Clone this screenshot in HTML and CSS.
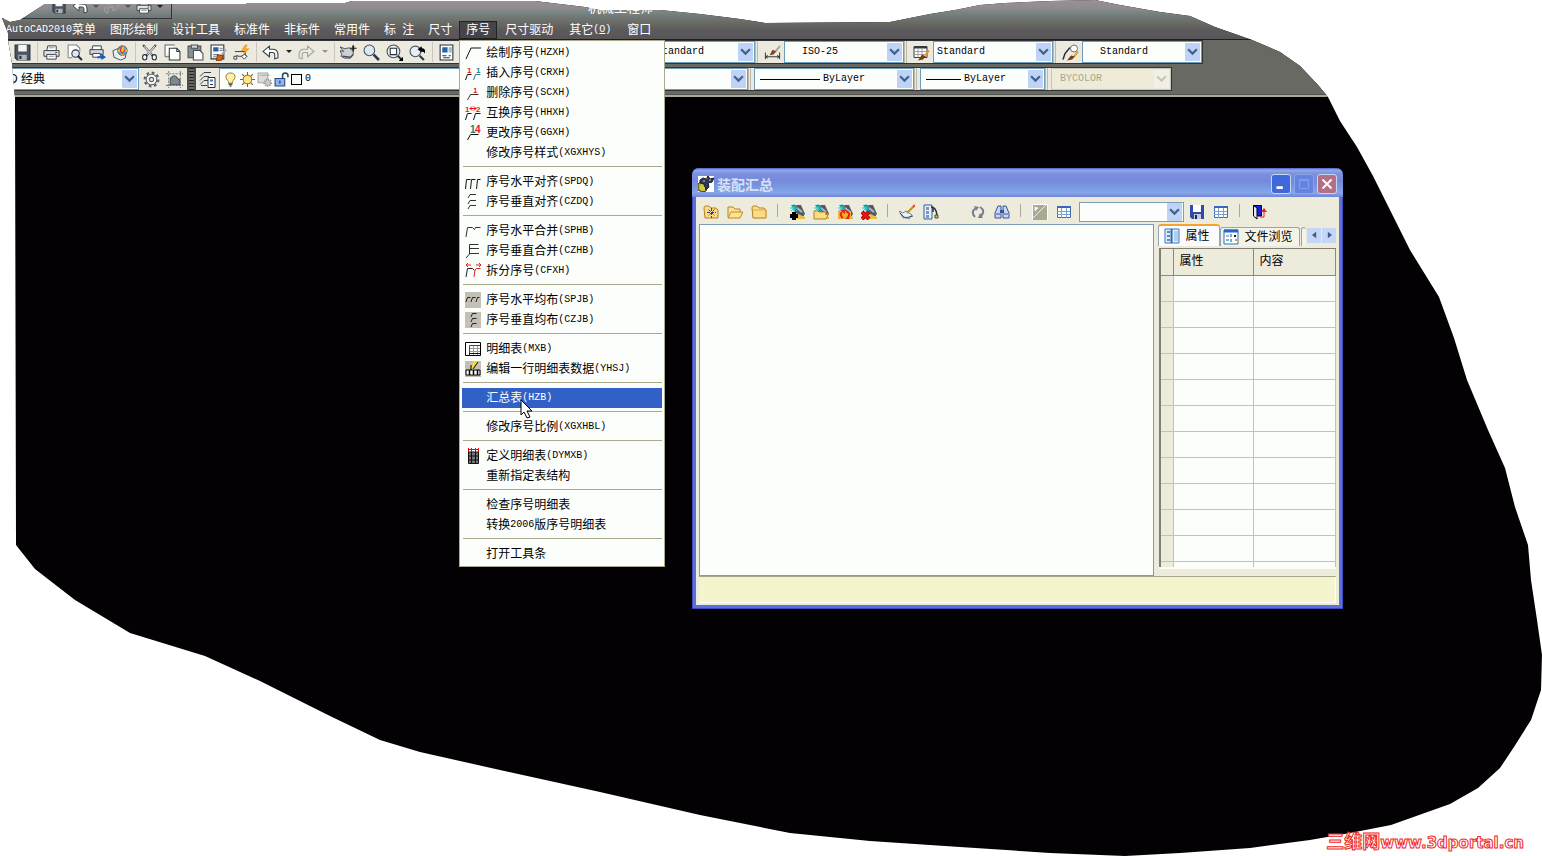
FILE: index.html
```html
<!DOCTYPE html>
<html lang="zh-CN">
<head>
<meta charset="utf-8">
<title>装配汇总</title>
<link rel="stylesheet" href="styles.css">
</head>
<body>
<svg class="defs" aria-hidden="true">
  <symbol id="i-save" viewBox="0 0 16 16"><path d="M1 1h14v14H3l-2-2z" fill="#4c5360" stroke="#26303c"/><path d="M4 1h8v6H4z" fill="#f4f4f0"/><path d="M4 10h8v5H4z" fill="#a9b3ba"/><path d="M5 11h2v3H5z" fill="#2b3340"/></symbol>
  <symbol id="i-print" viewBox="0 0 18 16"><path d="M5 1h9v5H4z" fill="#fff" stroke="#333a45"/><path d="M1 6h16v6H1z" fill="#e3e5e6" stroke="#333a45"/><path d="M4 10h10v5H4z" fill="#fff" stroke="#333a45"/><path d="M6 3h6M6 12h6" stroke="#8b949b"/><path d="M13 8h2" stroke="#333a45"/></symbol>
  <symbol id="i-preview" viewBox="0 0 16 16"><path d="M2 13V1h8l3 3v3" fill="#fff" stroke="#7c858d"/><path d="M2 13h4" stroke="#7c858d"/><circle cx="9" cy="9" r="3.5" fill="#dfe9ef" stroke="#26303c"/><path d="M11 11l4 4" stroke="#26303c" stroke-width="2"/></symbol>
  <symbol id="i-plot" viewBox="0 0 18 16"><path d="M4 1h9v5H3z" fill="#fff" stroke="#333a45"/><path d="M1 5h14v5H1z" fill="#d5d8da" stroke="#333a45"/><path d="M4 9h8v4H4z" fill="#fff" stroke="#333a45"/><path d="M9 12h4v-3l5 4-5 3v-2H9z" fill="#1957c2"/></symbol>
  <symbol id="i-dwf" viewBox="0 0 18 16"><path d="M1 6l5-2 9 4-1 6-5 2-7-3z" fill="#edf0f2" stroke="#46505a"/><circle cx="11" cy="6" r="5" fill="#55b8d0" stroke="#46505a"/><path d="M11 1v10M6 6h10" stroke="#f0d040" stroke-width="2"/><path d="M11 1q-4 5 0 8l3-4" stroke="#e33" fill="none" stroke-width="1.5"/></symbol>
  <symbol id="i-cut" viewBox="0 0 16 16"><path d="M2 1l9 10M14 1L5 11" stroke="#414b55" stroke-width="2"/><path d="M3 2l7 8M13 2l-7 8" stroke="#dce0e2"/><ellipse cx="3.5" cy="12.5" rx="2" ry="2.5" fill="#fff" stroke="#26303c"/><ellipse cx="12.5" cy="12.5" rx="2" ry="2.5" fill="#fff" stroke="#26303c"/></symbol>
  <symbol id="i-copy" viewBox="0 0 16 16"><path d="M1 12V1h9M1 12h4" fill="#fff" stroke="#636b74"/><path d="M5 4h7l3 3v8H5z" fill="#fff" stroke="#333a45"/><path d="M12 4v3h3" fill="none" stroke="#333a45"/></symbol>
  <symbol id="i-paste" viewBox="0 0 16 16"><path d="M1 2h12v11H1z" fill="#8b9198" stroke="#46505a"/><path d="M4 1h6v3H4z" fill="#d5d8da" stroke="#46505a"/><path d="M6 6h6l3 3v6H6z" fill="#fff" stroke="#46505a"/></symbol>
  <symbol id="i-match" viewBox="0 0 16 16"><path d="M1 1h12v13H1z" fill="#fff" stroke="#26303c"/><path d="M3 3h5v4H3z" fill="#2f5fa5"/><path d="M9 4h3M9 6h3M3 10h4M3 12h3" stroke="#78828c"/><path d="M15 5l-4 5" stroke="#aab" stroke-width="2"/><path d="M7 10l5 1-1 4-5 1z" fill="#cf6515" stroke="#8a3d0b"/></symbol>
  <symbol id="i-block" viewBox="0 0 18 16"><path d="M2 7h11v5H5M1 13l4-2" fill="none" stroke="#333a45"/><path d="M1 12h3v3H1zM9 12l3-2 3 2-3 3z" fill="#fff" stroke="#333a45"/><path d="M13 0l-4 6h4l-2 4 6-6h-4l2-4z" fill="#ffb30f" stroke="#dc7d08" stroke-width=".5"/></symbol>
  <symbol id="i-undo" viewBox="0 0 16 14"><path d="M1 6l6-5v3h3q5 0 5 5v3l-3 1V9q0-2-2-2H7v4z" fill="#fff" stroke="#39434e"/></symbol>
  <symbol id="i-redo" viewBox="0 0 16 14"><path d="M15 6L9 1v3H6Q1 4 1 9v3l3 1V9q0-2 2-2h3v4z" fill="none" stroke="#a2a4a2"/></symbol>
  <symbol id="i-caret" viewBox="0 0 6 4"><path d="M0 0h6L3 3z" fill="currentColor"/></symbol>
  <symbol id="i-pan" viewBox="0 0 18 16"><path d="M0 2l5 2 5-1 4 4v3l-3 4H5l-4-2 1-2-2-4 4 1z" fill="#cdd1d3" stroke="#46505a"/><path d="M3 12l8 1 3-3" fill="none" stroke="#46505a" stroke-width="1.500"/><path d="M14 0v7M10.500 3.500h7" stroke="#000"/><path d="M13 1h2v5h-2z" fill="#222"/></symbol>
  <symbol id="i-zoom" viewBox="0 0 16 16"><circle cx="6" cy="6" r="5" fill="#dce8f1" stroke="#46505a"/><path d="M10 10l5 5" stroke="#29394e" stroke-width="2.500"/></symbol>
  <symbol id="i-zoomwin" viewBox="0 0 16 16"><circle cx="7" cy="7" r="6" fill="#e8eef1" stroke="#46505a"/><path d="M4 4h6v6H4z" fill="#fff" stroke="#26303c"/><path d="M11 11l4 4" stroke="#29394e" stroke-width="2"/><path d="M16 12v4h-4z"/></symbol>
  <symbol id="i-zoomprev" viewBox="0 0 16 16"><circle cx="6" cy="7" r="5" fill="#e8eef1" stroke="#46505a"/><path d="M10 11l4 4" stroke="#29394e" stroke-width="2"/><path d="M8 5l4-3v2q4 0 3 5-1-2-3-2v1z"/></symbol>
  <symbol id="i-props" viewBox="0 0 14 16"><path d="M1 1h12v14H1z" fill="#fff" stroke="#26303c"/><path d="M3 3h5v5H3z" fill="#2760a6"/><path d="M9 3h3v5H9z" fill="#9db8d2"/><path d="M3 11h4M9 11h2M4 13h6" stroke="#333"/></symbol>
  <symbol id="i-dim" viewBox="0 0 18 16"><path d="M1.500 8v7M16.500 8v7M2 12.500h14M4 11l-2 1.500L4 14M14 11l2 1.500-2 1.500" fill="none" stroke="#26303c"/><path d="M17 1l-5 6" stroke="#a8a49c" stroke-width="2"/><path d="M9 5l4 2-3 3-4 1z" fill="#7a4424"/></symbol>
  <symbol id="i-tbl" viewBox="0 0 17 16"><path d="M1 2h13v11H1z" fill="#fff" stroke="#333a45"/><path d="M1 3h13" stroke="#333a45" stroke-width="2"/><path d="M5 4v9M9 4v9M1 7h13M1 10h13" stroke="#9ba0a3"/><path d="M16 6l-4 5" stroke="#ed941d" stroke-width="2"/><path d="M9 10l4 2-3 3-5 1z" fill="#7a3b14"/></symbol>
  <symbol id="i-lead" viewBox="0 0 17 16"><path d="M1 15L3 9l5-6" fill="none" stroke="#26303c" stroke-width="1.500"/><circle cx="12" cy="4" r="3.500" fill="#fff" stroke="#697480"/><path d="M16 7l-4 5" stroke="#ed941d" stroke-width="2"/><path d="M9 11l4 1-3 3-5 1z" fill="#7a3b14"/></symbol>
  <symbol id="i-gear" viewBox="0 0 16 16"><circle cx="8" cy="8" r="6.500" fill="none" stroke="#59616a" stroke-width="2" stroke-dasharray="2.550"/><circle cx="8" cy="8" r="5" fill="#fafaf7" stroke="#59616a"/><circle cx="8" cy="8" r="2" fill="#ece9d8" stroke="#59616a"/></symbol>
  <symbol id="i-space" viewBox="0 0 16 16"><path d="M2.500 0v16M13.500 0v16M0 2.500h16M0 13.500h16" stroke="#7b8388" stroke-dasharray="2 1"/><path d="M4 7q4-5 7 0l2 1v5H4z" fill="#7d878e" stroke="#46505a"/></symbol>
  <symbol id="i-layers" viewBox="0 0 17 16"><path d="M1 5l4-4h7M1 9l4-4h5M1 13l4-4h4M2 14h6" fill="none" stroke="#39434e"/><path d="M9 6h7v10H9z" fill="#fff" stroke="#26303c"/><path d="M11 8h3v2h-3z" fill="#3276bd"/><path d="M11 13h3" stroke="#26303c"/></symbol>
  <symbol id="i-bulb" viewBox="0 0 12 16"><path d="M6 1C0 1 0 7 4 10v2h4v-2c4-3 4-9-2-9z" fill="#fff2a0" stroke="#887842"/><path d="M4 13h4M5 15h2" stroke="#46505a" stroke-width="1.500"/></symbol>
  <symbol id="i-sun" viewBox="0 0 14 14"><path d="M7 0v14M0 7h14M2 2l10 10M12 2L2 12" stroke="#726035"/><circle cx="7" cy="7" r="4" fill="#ffe683" stroke="#a37c2b"/></symbol>
  <symbol id="i-vpf" viewBox="0 0 14 14"><path d="M1 1h9v9H1zM3 3h9" fill="#ddd" stroke="#a6a6a6"/><circle cx="10" cy="10" r="3" fill="#ccc" stroke="#999" stroke-dasharray="1 1" stroke-width="2"/></symbol>
  <symbol id="i-lock" viewBox="0 0 14 14"><path d="M8 7V3q0-2 2.500-2T13 3v2" fill="none" stroke="#2d4a70" stroke-width="1.500"/><path d="M1 6h9v7H1z" fill="#8fb5ee" stroke="#29497d"/><path d="M5.500 8v3" stroke="#19335d"/></symbol>
  <symbol id="i-down" viewBox="0 0 10 7"><path d="M1 1l4 4 4-4" fill="none" stroke="currentColor" stroke-width="2"/></symbol>

  <symbol id="m-draw" viewBox="0 0 16 16"><path d="M1 14L6 3h10" fill="none" stroke="#111"/></symbol>
  <symbol id="m-ins" viewBox="0 0 16 16"><path d="M.5 15l2-5.500h4" fill="none" stroke="#111"/><path d="M8.500 15l2-5.500h5" fill="none" stroke="#287c82"/><text x="2" y="8" class="num red">1</text><text x="11" y="8" class="num teal">1</text></symbol>
  <symbol id="m-del" viewBox="0 0 16 16"><path d="M2.500 15l3-5.500h8" fill="none" stroke="#333"/><text x="8" y="8" class="num red">1</text></symbol>
  <symbol id="m-swap" viewBox="0 0 16 16"><path d="M.5 15l2-6.500h4M8.500 15l2-6.500h5" fill="none" stroke="#111"/><text x="0" y="7" class="num red">1</text><text x="11" y="7" class="num red">2</text><path d="M5 3.500h6M7 1.500l-2 2 2 2M9 1.500l2 2-2 2" fill="none" stroke="red"/></symbol>
  <symbol id="m-chg" viewBox="0 0 16 16"><path d="M2.500 15l3-5.500h8" fill="none" stroke="#111"/><text x="5" y="8" class="num big teal">1</text><text x="10" y="8" class="num big red">4</text></symbol>
  <symbol id="m-ha" viewBox="0 0 16 16"><path d="M.5 15l1-9.500h4M5.500 15l1-9.500h4M11.500 15l1-9.500h3" fill="none" stroke="#111"/></symbol>
  <symbol id="m-va" viewBox="0 0 16 16"><path d="M3 4l2-3.500h6M3 10l2-3.500h6M3 15l2-3.500h6" fill="none" stroke="#333"/></symbol>
  <symbol id="m-hm" viewBox="0 0 16 16"><path d="M1 14L2.500 4.500h5l2 2 1-2h5" fill="none" stroke="#333"/></symbol>
  <symbol id="m-vm" viewBox="0 0 16 16"><path d="M1 15l3.500-4V1.500h9M5 5.500h9M5 10.500h9" fill="none" stroke="#333"/></symbol>
  <symbol id="m-split" viewBox="0 0 16 16"><path d="M1 14L2.500 5.500h5l2 2" fill="none" stroke="#222"/><path d="M9 14l1-7 1.500-1.500h4M1 2h5M3 0L1 2l2 2M11 2h5M14 0l2 2-2 2" fill="none" stroke="#e02020"/></symbol>
  <symbol id="m-hd" viewBox="0 0 16 16"><path d="M0 0h16v16H0z" fill="#c5c0b6"/><path d="M1 10l1.500-4.500h3M6 10l1.500-4.500h3M11 10l1.500-4.500h2" fill="none" stroke="#222"/></symbol>
  <symbol id="m-vd" viewBox="0 0 16 16"><path d="M0 0h16v16H0z" fill="#c5c0b6"/><path d="M6 5l1.500-3.500h4M6 10l1.500-3.500h4M6 15l1.500-3.500h4" fill="none" stroke="#222"/></symbol>
  <symbol id="m-list" viewBox="0 0 16 16"><path d="M.5 1.500h15v13H.5z" fill="#fff" stroke="#000"/><path d="M4.500 14V4.500H15" fill="none" stroke="#a32020"/><path d="M5 7.500h10M5 10.500h10M8.500 5v9M12.500 5v9" stroke="#999"/><path d="M4 12.500h11" stroke="#111"/></symbol>
  <symbol id="m-edit" viewBox="0 0 16 16"><path d="M0 0h16v16H0z" fill="#c5c0b6"/><path d="M1 9h14v5H1z" fill="#fff" stroke="#000"/><path d="M4.500 9v5M8.500 9v5M12.500 9v5" stroke="#000" stroke-width="1.500"/><path d="M11 0L7 8" stroke="#f4df27" stroke-width="3"/><path d="M13 1L8 8M6 4v5" stroke="#000"/></symbol>
  <symbol id="m-def" viewBox="0 0 16 16"><path d="M3.500 4h10v11.500h-10z" fill="#777" stroke="#111"/><path d="M6.500 4v12M10.500 4v12M3 8h11M3 12h11" stroke="#111"/><path d="M3 1.500h11M3.500 0v4M6.500 0v4M10.500 0v4M13.500 0v4" stroke="red"/></symbol>

  <symbol id="d-app" viewBox="0 0 16 16"><path d="M0 0h16v16H0z" fill="#fff"/><path d="M0 8l4-3 5 5-1 5-4 1-4-2z" fill="#c4b52c" stroke="#262c35"/><path d="M2 4l3-2 3 1 2-3 2 3 4-1-2 4-4 1 1 4-3 3-2-6-4-1z" fill="#27376c" stroke="#15192b"/><path d="M8 2h1M11 4h2M5 5h2M3 9l2 1M2 12h5M4 10v5M6 11v4" stroke="#e0d442"/></symbol>
  <symbol id="d-folder" viewBox="0 0 16 14"><path d="M1 3q0-2 2-2h3l2 2h5l2 2v8H2z" fill="#f9dc87" stroke="#b78125"/><path d="M2 5h12M3 13h12V6" fill="none" stroke="#e0ac45"/></symbol>
  <symbol id="d-open" viewBox="0 0 16 14"><path d="M1 12V2h5l2 2h5v3" fill="#f9e29e" stroke="#b78125"/><path d="M1 13l3-6h12l-3 6z" fill="#ffe48e" stroke="#c58a29"/></symbol>
  <symbol id="d-new" viewBox="0 0 16 14"><path d="M1 3q0-2 2-2h3l2 2h5l2 2v8H2z" fill="#f9dc87" stroke="#b78125"/><path d="M8.500 3v10M4 7.500h9M5.500 4.500l6 6M11.500 4.500l-6 6" stroke="#2342bb" stroke-dasharray="3 1"/></symbol>
  <symbol id="d-part" viewBox="0 0 16 16"><path d="M2 1h10l4 9-2 3-7-4z" fill="#535c64"/><path d="M8 4l5 4" stroke="#aeb8c1" stroke-width="2"/><path d="M6 15l3-5 7 3v2z" fill="#e9c142"/><path d="M5 0v8M1 4h8M2 1l6 6M8 1L2 7" stroke="#18ccda"/></symbol>
  <symbol id="d-add" viewBox="0 0 16 16"><use href="#d-part"/><path d="M3 8h4v2h2v4H7v2H3v-2H1v-4h2z"/></symbol>
  <symbol id="d-popen" viewBox="0 0 16 16"><use href="#d-part"/><path d="M1 14V7h4l1 1h7v3l3-2-3 6H1z" fill="#fbdc82" stroke="#b78125"/></symbol>
  <symbol id="d-ref" viewBox="0 0 16 16"><use href="#d-part"/><path d="M1 7h13v8H1z" fill="#e8b531"/><path d="M6 14q-4-3-1-6M9 7q5 2 2 7" fill="none" stroke="#eb2410" stroke-width="2"/><path d="M3 6h5v4zM8 15l4 0 0-4z" fill="#eb2410"/></symbol>
  <symbol id="d-rm" viewBox="0 0 16 16"><use href="#d-part"/><path d="M1 8l7 7M8 8l-7 7" stroke="#9b0707" stroke-width="4"/><path d="M1 8l7 7M8 8l-7 7" stroke="#f21414" stroke-width="2"/></symbol>
  <symbol id="d-pen" viewBox="0 0 16 16"><path d="M0 7l4 2 3-2 6 4-3 4-4-2-2 1z" fill="#e8f2f8" stroke="#68829a"/><path d="M6 14l8-2M1 9l5 5" stroke="#38516b"/><path d="M15 2L8 9" stroke="#b9932b" stroke-width="2"/><path d="M16 1l-2 2" stroke="#e43" stroke-width="2"/></symbol>
  <symbol id="d-tree" viewBox="0 0 16 16"><path d="M1 1h8v14H1z" fill="#e7eeff" stroke="#2862a5"/><path d="M3 3h3v3H3zM3 7h3v3H3zM3 11h3v3H3z" fill="#8494bd"/><path d="M8 3q5 0 6 8M10 4v4" fill="none" stroke="#26303c" stroke-width="1.500"/><path d="M12 11h3v3h-3z" fill="#dacb4d" stroke="#4b4b30"/></symbol>
  <symbol id="d-sync" viewBox="0 0 16 14"><path d="M5 12Q0 7 6 3M10 2q6 4 1 9" fill="none" stroke="#77808a" stroke-width="2"/><path d="M4 1l5 1-3 4zM8 13l5 0-3-5z" fill="#77808a"/></symbol>
  <symbol id="d-find" viewBox="0 0 16 14"><path d="M1 8l3-7h3v12H1zM15 8l-3-7H9v12h6z" fill="#c9d7f5" stroke="#385494"/><path d="M6 5h4v3H6z" fill="#385494"/><path d="M2 9h4M10 9h4" stroke="#385494"/></symbol>
  <symbol id="d-gray" viewBox="0 0 16 16"><path d="M0 0h16v16H0z" fill="#aaa992"/><path d="M.5 16V.5H16M15.500 0v16" fill="none" stroke="#fff"/><path d="M1 14L14 1M3 3v4l3-3z" fill="#fff" stroke="#eee"/></symbol>
  <symbol id="d-grid" viewBox="0 0 16 14"><path d="M1.500 1.500h13v11h-13z" fill="#fff" stroke="#416bac"/><path d="M1 2h14" stroke="#3768be" stroke-width="2"/><path d="M5.500 3v10M10.500 3v10M1 6.500h13M1 9.500h13" stroke="#75a0d8"/></symbol>
  <symbol id="d-save" viewBox="0 0 16 16"><path d="M1 1h14v14H3l-2-2z" fill="#3348aa"/><path d="M4 1h8v7H4z" fill="#fff"/><path d="M5 10h7v5H5z" fill="#c3cad7"/><path d="M6 11h2v4H6z" fill="#1c2552"/></symbol>
  <symbol id="d-exit" viewBox="0 0 16 16"><path d="M2.500 12V1.500h8V12H7" fill="#1820e0" stroke="#000"/><path d="M2.500 1.500L6 4v11l-3.500-3z" fill="#e7e8ff" stroke="#000"/><path d="M9 13h4V7" fill="none" stroke="#ef2020"/><path d="M10 8l3-4 3 4z" fill="#ef2020"/></symbol>
  <symbol id="d-book" viewBox="0 0 16 16"><path d="M1 1h14v14H1z" fill="#d9efff" stroke="#3a76bd"/><path d="M7.500 1v14" stroke="#3269a9" stroke-width="2"/><path d="M3 3h3v2H3zM3 7h3v2H3zM3 11h3v2H3z" fill="#6689b4"/><path d="M10 4h4M10 6h4M10 8h4M10 10h4M10 12h4" stroke="#89acd4"/></symbol>
  <symbol id="d-files" viewBox="0 0 16 16"><path d="M1 1h14v14H1z" fill="#fff" stroke="#2c6ec0"/><path d="M1 2h14" stroke="#2268cd" stroke-width="3"/><path d="M3 6h3v2H3z" fill="#b4bac2"/><path d="M7 5h2v3H7zM7 10h2v3H7z" fill="#6eaee8"/><path d="M11 6h2v2h-2z" fill="#1b2029"/><path d="M3 10h3v2H3z" fill="#76b5cd"/><path d="M12 10h2v2h-2z" fill="#d39c3e"/></symbol>
</svg>

<main class="desktop">
  <header class="cad">
    <div class="titlebar">
      <div class="quick">
        <svg class="ic"><use href="#i-save"/></svg><svg class="ic"><use href="#i-undo"/></svg><svg class="tri light"><use href="#i-caret"/></svg><svg class="ic"><use href="#i-redo"/></svg><svg class="tri light"><use href="#i-caret"/></svg><svg class="ic"><use href="#i-print"/></svg><svg class="tri"><use href="#i-caret"/></svg>
      </div>
    </div>
    <nav class="menubar">
      <button><i>AutoCAD2010</i>菜单</button><button>图形绘制</button><button>设计工具</button><button>标准件</button><button>非标件</button><button>常用件</button><button>标<i> </i>注</button><button>尺寸</button>
      <div class="dropdown">
        <button class="open" aria-expanded="true">序号</button>
        <div class="popup" role="menu">
          <button role="menuitem"><svg><use href="#m-draw"/></svg>绘制序号<i>(HZXH)</i></button>
          <button role="menuitem"><svg><use href="#m-ins"/></svg>插入序号<i>(CRXH)</i></button>
          <button role="menuitem"><svg><use href="#m-del"/></svg>删除序号<i>(SCXH)</i></button>
          <button role="menuitem"><svg><use href="#m-swap"/></svg>互换序号<i>(HHXH)</i></button>
          <button role="menuitem"><svg><use href="#m-chg"/></svg>更改序号<i>(GGXH)</i></button>
          <button role="menuitem"><svg></svg>修改序号样式<i>(XGXHYS)</i></button>
          <hr>
          <button role="menuitem"><svg><use href="#m-ha"/></svg>序号水平对齐<i>(SPDQ)</i></button>
          <button role="menuitem"><svg><use href="#m-va"/></svg>序号垂直对齐<i>(CZDQ)</i></button>
          <hr>
          <button role="menuitem"><svg><use href="#m-hm"/></svg>序号水平合并<i>(SPHB)</i></button>
          <button role="menuitem"><svg><use href="#m-vm"/></svg>序号垂直合并<i>(CZHB)</i></button>
          <button role="menuitem"><svg><use href="#m-split"/></svg>拆分序号<i>(CFXH)</i></button>
          <hr>
          <button role="menuitem"><svg><use href="#m-hd"/></svg>序号水平均布<i>(SPJB)</i></button>
          <button role="menuitem"><svg><use href="#m-vd"/></svg>序号垂直均布<i>(CZJB)</i></button>
          <hr>
          <button role="menuitem"><svg><use href="#m-list"/></svg>明细表<i>(MXB)</i></button>
          <button role="menuitem"><svg><use href="#m-edit"/></svg>编辑一行明细表数据<i>(YHSJ)</i></button>
          <hr>
          <button role="menuitem" class="hot"><svg></svg>汇总表<i>(HZB)</i></button>
          <hr>
          <button role="menuitem"><svg></svg>修改序号比例<i>(XGXHBL)</i></button>
          <hr>
          <button role="menuitem"><svg><use href="#m-def"/></svg>定义明细表<i>(DYMXB)</i></button>
          <button role="menuitem"><svg></svg>重新指定表结构</button>
          <hr>
          <button role="menuitem"><svg></svg>检查序号明细表</button>
          <button role="menuitem"><svg></svg>转换<i>2006</i>版序号明细表</button>
          <hr>
          <button role="menuitem"><svg></svg>打开工具条</button>
        </div>
      </div>
      <button class="wide">尺寸驱动</button><button class="wide">其它<i>(<u>O</u>)</i></button><button class="wide">窗口</button>
    </nav>
    <div class="bars">
      <div class="bar">
        <div class="tools">
          <button aria-label="保存"><svg class="ic"><use href="#i-save"/></svg></button><span class="sep"></span>
          <button aria-label="打印"><svg class="ic"><use href="#i-print"/></svg></button><button aria-label="预览"><svg class="ic"><use href="#i-preview"/></svg></button><button aria-label="发布"><svg class="ic"><use href="#i-plot"/></svg></button><button aria-label="DWF"><svg class="ic"><use href="#i-dwf"/></svg></button><span class="sep"></span>
          <button aria-label="剪切"><svg class="ic"><use href="#i-cut"/></svg></button><button aria-label="复制"><svg class="ic"><use href="#i-copy"/></svg></button><button aria-label="粘贴"><svg class="ic"><use href="#i-paste"/></svg></button><button aria-label="特性匹配"><svg class="ic"><use href="#i-match"/></svg></button><button aria-label="块"><svg class="ic"><use href="#i-block"/></svg></button><span class="sep"></span>
          <button aria-label="放弃"><svg class="ic"><use href="#i-undo"/></svg></button><button class="slim" aria-label="放弃列表"><svg class="tri"><use href="#i-caret"/></svg></button><button aria-label="重做"><svg class="ic"><use href="#i-redo"/></svg></button><button class="slim off" aria-label="重做列表"><svg class="tri"><use href="#i-caret"/></svg></button><span class="sep"></span>
          <button aria-label="平移"><svg class="ic"><use href="#i-pan"/></svg></button><button aria-label="缩放"><svg class="ic"><use href="#i-zoom"/></svg></button><button aria-label="窗口缩放"><svg class="ic"><use href="#i-zoomwin"/></svg></button><button aria-label="上一个"><svg class="ic"><use href="#i-zoomprev"/></svg></button><span class="sep"></span>
          <button aria-label="特性"><svg class="ic"><use href="#i-props"/></svg></button>
        </div>
        <span class="combo w140 indent40"><select aria-label="文字样式"><option>Standard</option></select><svg><use href="#i-down"/></svg></span>
        <span class="cell"><svg class="ic"><use href="#i-dim"/></svg></span>
        <span class="combo w120 indent17"><select aria-label="标注样式"><option>ISO-25</option></select><svg><use href="#i-down"/></svg></span>
        <span class="cell"><svg class="ic"><use href="#i-tbl"/></svg></span>
        <span class="combo w120"><select aria-label="表格样式"><option>Standard</option></select><svg><use href="#i-down"/></svg></span>
        <span class="cell"><svg class="ic"><use href="#i-lead"/></svg></span>
        <span class="combo w120 indent17"><select aria-label="引线样式"><option>Standard</option></select><svg><use href="#i-down"/></svg></span>
      </div>
      <div class="bar">
        <span class="combo w139 han"><select aria-label="工作空间"><option>D 经典</option></select><svg><use href="#i-down"/></svg></span>
        <div class="tools second"><button aria-label="设置"><svg class="ic"><use href="#i-gear"/></svg></button><button aria-label="空间"><svg class="ic"><use href="#i-space"/></svg></button></div>
        <span class="grip"></span>
        <div class="tools layer"><button aria-label="图层"><svg class="ic"><use href="#i-layers"/></svg></button></div>
        <span class="combo layers"><svg class="st"><use href="#i-bulb"/></svg><svg class="st"><use href="#i-sun"/></svg><svg class="st"><use href="#i-vpf"/></svg><svg class="st"><use href="#i-lock"/></svg><span class="swatch"></span><select aria-label="图层列表"><option>0</option></select></span>
        <span class="combo w120"><select aria-label="颜色"><option></option></select><svg><use href="#i-down"/></svg></span>
        <span class="gap"></span>
        <span class="combo w160"><span class="rule"></span><select aria-label="线型"><option>ByLayer</option></select><svg><use href="#i-down"/></svg></span>
        <span class="gap"></span>
        <span class="combo w125"><span class="rule short"></span><select aria-label="线宽"><option>ByLayer</option></select><svg><use href="#i-down"/></svg></span>
        <span class="gap"></span>
        <span class="combo w120 disabled"><select disabled aria-label="打印样式"><option>BYCOLOR</option></select><svg><use href="#i-down"/></svg></span>
      </div>
    </div>
  </header>

  <svg class="cursor" viewBox="0 0 13 21"><path d="M1 1v15l3-3 3 6 3-1-3-6h5z" fill="#fff" stroke="#000"/></svg>

  <section class="dialog" role="dialog" aria-label="装配汇总">
    <div class="dlg-title">
      <svg class="app"><use href="#d-app"/></svg><h1>装配汇总</h1>
      <button class="win" aria-label="最小化"><svg viewBox="0 0 20 20"><path d="M5 14h7" stroke="#fff" stroke-width="3"/></svg></button>
      <button class="win max" aria-label="最大化" disabled><svg viewBox="0 0 20 20"><path d="M5 5h10v10H5zM5 6h10" fill="none" stroke="#86a0ee"/></svg></button>
      <button class="win close" aria-label="关闭"><svg viewBox="0 0 20 20"><path d="M5 5l10 10M15 5L5 15" stroke="#fff" stroke-width="2"/></svg></button>
    </div>
    <div class="dlg-tools">
      <button aria-label="新建"><svg><use href="#d-new"/></svg></button><button aria-label="打开"><svg><use href="#d-open"/></svg></button><button aria-label="文件夹"><svg><use href="#d-folder"/></svg></button><span class="dsep"></span>
      <button aria-label="添加零件"><svg><use href="#d-add"/></svg></button><button aria-label="打开零件"><svg><use href="#d-popen"/></svg></button><button aria-label="更新零件"><svg><use href="#d-ref"/></svg></button><button aria-label="删除零件"><svg><use href="#d-rm"/></svg></button><span class="dsep"></span>
      <button aria-label="编辑"><svg><use href="#d-pen"/></svg></button><button aria-label="结构"><svg><use href="#d-tree"/></svg></button><span class="blank"></span>
      <button aria-label="刷新"><svg><use href="#d-sync"/></svg></button><button aria-label="查找"><svg><use href="#d-find"/></svg></button><span class="dsep"></span>
      <button aria-label="图形"><svg><use href="#d-gray"/></svg></button><button aria-label="表格"><svg><use href="#d-grid"/></svg></button>
      <span class="combo w105"><select aria-label="方案"><option></option></select><svg><use href="#i-down"/></svg></span>
      <button aria-label="保存方案"><svg><use href="#d-save"/></svg></button><button aria-label="表格设置"><svg><use href="#d-grid"/></svg></button><span class="dsep"></span>
      <button aria-label="退出"><svg><use href="#d-exit"/></svg></button>
    </div>
    <div class="dlg-body">
      <div class="tree"></div>
      <aside class="side">
        <div class="tabs" role="tablist">
          <button class="tab on" role="tab" aria-selected="true"><svg><use href="#d-book"/></svg>属性</button><button class="tab" role="tab"><svg><use href="#d-files"/></svg>文件浏览</button><span class="tab stub"></span>
          <span class="scroll"><button aria-label="向左"><svg viewBox="0 0 6 8"><path d="M5 0v8L0 4z" fill="#3e5d91"/></svg></button><button aria-label="向右"><svg viewBox="0 0 6 8"><path d="M1 0v8l5-4z" fill="#3e5d91"/></svg></button></span>
        </div>
        <div class="sheet">
          <table>
            <thead><tr><th class="mark"></th><th class="name">属性</th><th>内容</th></tr></thead>
            <tbody>
              <tr><td class="mark"></td><td></td><td></td></tr><tr><td class="mark"></td><td></td><td></td></tr><tr><td class="mark"></td><td></td><td></td></tr><tr><td class="mark"></td><td></td><td></td></tr><tr><td class="mark"></td><td></td><td></td></tr><tr><td class="mark"></td><td></td><td></td></tr><tr><td class="mark"></td><td></td><td></td></tr><tr><td class="mark"></td><td></td><td></td></tr><tr><td class="mark"></td><td></td><td></td></tr><tr><td class="mark"></td><td></td><td></td></tr><tr><td class="mark"></td><td></td><td></td></tr><tr><td class="mark"></td><td></td><td></td></tr>
            </tbody>
          </table>
        </div>
      </aside>
    </div>
    <footer class="status"></footer>
  </section>
</main>
<span class="apptitle">机械工程师</span>
<p class="mark-text"><b>三维网</b>www.3dportal.cn</p>
</body>
</html>
```
FILE: styles.css
```css
* { box-sizing: border-box; }
body { margin: 0; background: #fff; overflow: hidden; font: 12px/16px "Liberation Sans", "Noto Sans CJK SC", sans-serif; color: #000; }
button, select { font: inherit; color: inherit; margin: 0; padding: 0; border: 0; background: none; appearance: none; border-radius: 0; }
button { display: flex; align-items: center; justify-content: center; white-space: pre; }
i { font: 10px/16px "Liberation Mono", monospace; white-space: pre; }
.defs { display: none; }
.num { font: bold 8px "Liberation Sans", sans-serif; }
.num.big { font-size: 10px; }
.red { fill: #f01818; }
.teal { fill: #188088; }

.desktop {
  position: relative; min-height: 100vh; background: #030103; overflow: hidden;
  clip-path: polygon(2px 18px, 10px 22px, 20px 20px, 34px 11px, 45px 4px, 246px 4px, 248px 3px, 345px 3px, 352px 1px, 535px 1px, 560px 4px, 585px 7px, 600px 10px, 660px 10px, 700px 14px, 740px 19px, 765px 23px, 890px 22px, 905px 19px, 930px 14px, 955px 10px, 980px 5px, 1005px 3px, 1050px 1px, 1095px 0, 1120px 5px, 1160px 12px, 1190px 16px, 1215px 27px, 1235px 34px, 1252px 40px, 1280px 52px, 1300px 66px, 1318px 85px, 1328px 97px, 1340px 121px, 1357px 147px, 1373px 176px, 1391px 212px, 1410px 250px, 1439px 297px, 1454px 338px, 1467px 380px, 1488px 430px, 1505px 468px, 1515px 507px, 1528px 545px, 1531px 580px, 1537px 620px, 1542px 655px, 1541px 690px, 1531px 720px, 1514px 747px, 1500px 768px, 1478px 788px, 1450px 804px, 1391px 825px, 1350px 833px, 1310px 840px, 1250px 848px, 1180px 853px, 1125px 856px, 1050px 853px, 960px 847px, 870px 841px, 790px 833px, 700px 815px, 600px 792px, 500px 770px, 420px 752px, 380px 740px, 330px 716px, 260px 681px, 205px 656px, 130px 633px, 75px 600px, 35px 569px, 16px 545px, 15px 97px, 12px 63px, 8px 40px, 8px 33px);
}

.cad { background: linear-gradient(#9c9096 0, #8e8c90 8px, #74807f 14px, #6b6c66 22px, #5c5a5d 30px, #575558 38px); }
.titlebar { display: flex; height: 19px; }
.quick { display: flex; flex: none; align-items: center; gap: 5px; width: 172px; padding: 0 4px 4px 51px; border: solid #30353a; border-width: 0 1px 1px 0; }
.quick .ic { width: 16px; height: 14px; }
.apptitle { position: absolute; left: 588px; top: 0; color: #fff; font: 13px/14px "Noto Sans CJK SC", sans-serif; }
.ic { width: 17px; height: 17px; flex: none; }
.tri { width: 6px; height: 4px; flex: none; color: #222; }
.tri.light { color: #555; }

.menubar { display: flex; height: 21px; padding-top: 2px; border-bottom: 1px solid #202022; color: #fff; }
.menubar > button, .open { height: 18px; padding: 0 7px; }
.menubar > button:first-child { margin-left: -1px; }
.menubar > .wide { padding: 0 8px; }
.open { background: #454447; box-shadow: inset 0 0 0 1px #202226; }
.dropdown { position: relative; }
.popup { position: absolute; z-index: 5; left: 0; top: 19px; width: 206px; padding: 2px; background: #fcfefc; border: 1px solid #a9a98c; color: #000; }
.popup button { width: 100%; height: 20px; justify-content: flex-start; padding-left: 3px; }
.popup svg { width: 16px; height: 16px; margin-right: 5px; flex: none; }
.popup hr { height: 1px; margin: 3px 0 5px 1px; border: 0; background: #a9a98c; }
.popup .hot { background: #3161c6; color: #fff; }

.bars { display: grid; gap: 5px; padding: 1px 0 5px; background: #696963; border-bottom: 2px solid #aaa999; box-shadow: inset 0 -1px #55554f; }
.bar { display: flex; width: max-content; height: 22px; background: #ece9df; box-shadow: 0 0 0 1px #303436; }
.tools { display: flex; width: 615px; padding-left: 11px; }
.tools button { width: 23px; color: #222; }
.tools .slim { width: 13px; }
.tools .off svg { color: #998f99; }
.tools.second { width: 48px; padding: 0 1px; }
.tools.layer { width: 23px; padding: 0; }
.sep { width: 1px; height: 20px; margin: 1px 2px 1px 3px; background: #cdc6be; }
.cell { display: flex; width: 29px; align-items: center; justify-content: center; padding-left: 3px; border-left: 3px double #bdb9ad; }
.gap { width: 6px; border-left: 3px double #bdb9ad; }
.grip { width: 9px; background: repeating-linear-gradient(#202426 0 1px, #696963 1px 3px); border: solid #4c4c48; border-width: 0 2px; }
.combo { display: flex; align-items: center; background: #fcfefc; border: 1px solid #6d9db9; }
.combo select { flex: 1; min-width: 0; height: 100%; padding: 0 3px; font: 10px/18px "Liberation Mono", monospace; }
.combo > svg:last-child { width: 15px; height: 18px; margin-right: 1px; padding: 5px 2px; background: #bfd3f7; color: #42618c; flex: none; border-radius: 1px; }
.combo.han select { padding-left: 8px; font: 12px/18px "Liberation Sans", "Noto Sans CJK SC", sans-serif; }
.w105 { width: 105px; } .w120 { width: 120px; } .w125 { width: 125px; } .w139 { width: 139px; } .w140 { width: 140px; } .w160 { width: 160px; }
.combo.indent17 select { padding-left: 17px; }
.combo.indent40 select { padding-left: 40px; }
.combo.layers { width: 409px; gap: 2px; padding-left: 3px; }
.combo.layers select { padding-left: 1px; }
.st { width: 15px; height: 15px; flex: none; }
.swatch { width: 11px; height: 11px; border: 1px solid #000; }
.rule { width: 60px; height: 1px; margin-left: 5px; background: #000; }
.rule.short { width: 35px; }
.combo.disabled { background: #eeecd9; border-color: #c9c7ba; color: #aaa78e; }
.combo.disabled select { padding-left: 8px; opacity: 1; }
.combo.disabled > svg:last-child { background: #f2f0e6; color: #c9c7ba; }

.cursor { position: absolute; z-index: 6; left: 520px; top: 399px; width: 13px; height: 21px; }

.dialog { position: absolute; left: 692px; top: 168px; width: 651px; padding: 0 4px 4px; background: #5d70d6; border-radius: 7px 7px 0 0; box-shadow: inset 0 0 0 1px #3d4bbd; overflow: hidden; }
.dlg-title { display: flex; align-items: center; gap: 3px; height: 29px; margin: 0 -4px; padding: 3px 6px 1px 6px; background: linear-gradient(#4c5ec4 0, #91aae9 2px, #7a90df 6px, #7788da 13px, #779ae0 19px, #86a5e7 25px, #6f83d6 29px); }
.dlg-title .app { width: 16px; height: 16px; }
.dlg-title h1 { flex: 1; margin: 0; font: bold 14px/18px "Noto Sans CJK SC", sans-serif; color: #d6e2f6; }
.win { width: 20px; height: 20px; background: #3f68da; border: 1px solid #c7d5f6; border-radius: 3px; }
.win.max { background: #6683de; border-color: #8aa2e8; }
.win.close { background: #b36f83; }
.win svg { width: 18px; height: 18px; }
.dlg-tools { display: flex; align-items: center; height: 27px; padding: 3px 3px 0; background: #edebdc; }
.dlg-tools button { width: 24px; height: 22px; }
.dlg-tools button svg { width: 16px; height: 16px; }
.dlg-tools .combo { height: 20px; margin: 0 1px 0 3px; border-color: #7f9db9; }
.dsep { width: 1px; height: 13px; margin: 0 7px 4px 6px; background: #aca899; }
.blank { width: 23px; }
.dlg-body { display: flex; gap: 4px; height: 352px; padding: 0 3px; background: #edebdc; }
.tree { flex: 1; background: #fcfefc; border: 1px solid #7f9db9; }
.side { display: flex; flex-direction: column; width: 178px; }
.tabs { display: flex; align-items: flex-end; height: 22px; }
.tab { gap: 5px; width: 80px; height: 19px; padding-right: 4px; background: #f4f3ea; border: 1px solid #91a7b4; border-bottom: 0; border-radius: 3px 3px 0 0; }
.tab svg { width: 16px; height: 16px; }
.tab.on { width: 62px; height: 22px; background: #fcfcfe; border-top: 2px solid #f5a22f; }
.tab.stub { width: 5px; padding: 0; border-right: 0; margin-left: 1px; }
.scroll { display: flex; align-self: center; margin-left: 1px; gap: 1px; }
.scroll button { width: 14px; height: 15px; background: #c5d6f7; }
.scroll svg { width: 5px; height: 8px; }
.sheet { flex: 1; min-height: 0; margin: 2px 0 0 1px; overflow: hidden; border: solid #817f74; border-width: 1px 0 0 2px; background: #fcfefc; box-shadow: 0 2px #fcfcf8; margin-bottom: 9px; }
table { width: 100%; border-collapse: collapse; table-layout: fixed; }
th, td { height: 26px; padding: 0; border: solid #c2c2c2; border-width: 0 1px 1px 0; }
th { padding: 0 0 2px 6px; text-align: left; font-weight: normal; background: #edebdc; border-color: #8c897b; }
th.mark { width: 12px; padding: 0; }
th.name { width: 80px; }
td.mark { background: #edebdc; }
.status { height: 29px; background: #f4f5cd; border: solid #edebdc; border-width: 0 3px 2px; box-shadow: inset 0 1px #a9a68f, inset -1px -1px #fff; }

.mark-text { position: absolute; right: 18px; bottom: 3px; margin: 0; font: bold 15px/20px "DejaVu Sans", sans-serif; color: #fff; -webkit-text-stroke: 1px #ee2727; }
.mark-text b { font: bold 18px/20px "Noto Sans CJK SC", sans-serif; }
```
